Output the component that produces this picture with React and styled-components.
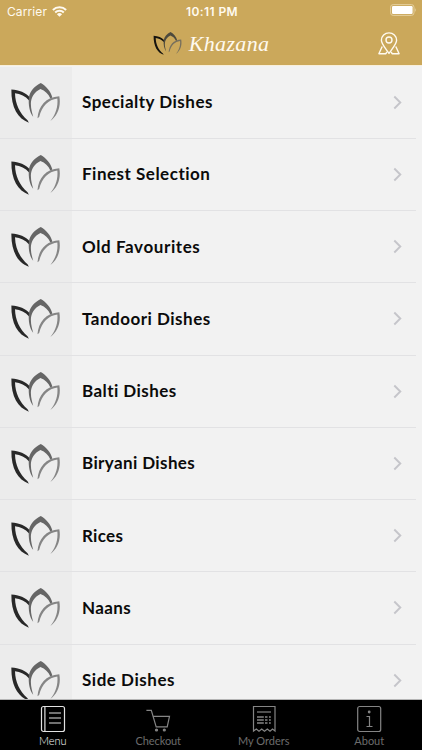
import React from 'react';
import styled, { createGlobalStyle } from 'styled-components';

const GlobalStyle = createGlobalStyle`
	* {
		box-sizing: border-box;
	}
	body {
		margin: 0;
		background: #f2f2f2;
		font-family: Lato, 'Open Sans', sans-serif;
	}
`;

const Screen = styled.div`
	width: 422px;
	height: 750px;
	display: flex;
	flex-direction: column;
	overflow: hidden;
	background: #f2f2f2;
`;

const Header = styled.header`
	height: 66px;
	flex-shrink: 0;
	background: #cba85b;
	border-bottom: 1px solid #f8efdb;
	color: #fffaf0;
`;

const StatusBar = styled.div`
	height: 22px;
	display: grid;
	grid-template-columns: 1fr auto 1fr;
	align-items: center;
	padding: 0 5px 0 7px;
	font-family: Inter, sans-serif;
	font-size: 12px;
`;

const Carrier = styled.div`
	display: flex;
	align-items: center;
	gap: 5px;
	letter-spacing: 0.1px;
`;

const Time = styled.div`
	font-weight: 600;
	letter-spacing: 0.4px;
`;

const Battery = styled.div`
	display: flex;
	justify-content: flex-end;
	padding-bottom: 2px;
`;

const NavBar = styled.div`
	height: 43px;
	display: grid;
	grid-template-columns: 1fr auto 1fr;
	align-items: center;
	padding: 0 22px;
`;

const Brand = styled.div`
	grid-column: 2;
	display: flex;
	align-items: center;
	gap: 7px;
`;

const BrandName = styled.h1`
	margin: 0;
	font-family: 'Liberation Serif', serif;
	font-size: 22px;
	line-height: 26px;
	font-style: italic;
	font-weight: 400;
	letter-spacing: 0.35px;
`;

const MapButton = styled.button`
	justify-self: end;
	display: flex;
	padding: 0;
	border: 0;
	background: none;
	color: inherit;
`;

const List = styled.main`
	flex: 1;
	min-height: 0;
	padding-top: 0.5px;
	overflow: hidden;
`;

const Row = styled.div`
	height: 72.25px;
	display: flex;
`;

const Thumb = styled.div`
	width: 71.5px;
	display: flex;
	justify-content: center;
	align-items: center;
	padding-top: 1px;
	background: #ececec;
	border-bottom: 1px solid #e2e2e4;
`;

const RowBody = styled.div`
	flex: 1;
	display: flex;
	justify-content: space-between;
	align-items: center;
	margin-right: 6px;
	padding: 0 14px 0 10.5px;
	border-bottom: 1px solid #e2e2e4;
`;

const RowTitle = styled.span`
	font-size: 17px;
	line-height: 22px;
	font-weight: 700;
	color: #0b0b0b;
	letter-spacing: ${(props) => props.$spacing}px;
`;

const TabBar = styled.nav`
	height: 51px;
	flex-shrink: 0;
	display: grid;
	grid-template-columns: repeat(4, 1fr);
	background: #000;
	border-top: 1px solid #b5b5b5;
`;

const Tab = styled.div`
	display: flex;
	flex-direction: column;
	align-items: center;
	padding-top: 5px;
	color: ${(props) => (props.$active ? '#e2e2e2' : '#858585')};
	font-size: 11px;
	line-height: 14px;
	letter-spacing: ${(props) => props.$spacing}px;

	svg {
		display: block;
		margin-bottom: 1px;
	}
`;

const TabLabel = styled.span`
	font-weight: ${(props) => (props.$active ? 300 : 400)};
	color: ${(props) => (props.$active ? '#fff' : '#6c6c6c')};
`;

const Lotus = ({ width, height, dark = '#282828', mid = '#666', light = '#858585' }) => (
	<svg width={width} height={height} viewBox="34 47 148 121">
		<path
			fill={dark}
			d="M35 67C58 69 79 76 91 91L88 99C78 87 62 80 46 78C47 111 59 137 84 160L88 167C55 156 34 122 35 67Z"
		/>
		<path
			fill={mid}
			d="M124 47C141 57 154 72 159 91L153 94C147 80 137 70 123 65C105 73 94 90 94 110C94 127 98 137 101 149C90 136 86 113 88 91C91 71 105 57 124 47Z"
		/>
		<path
			fill={light}
			d="M180 87C186 119 174 147 153 162C167 144 177 121 174 94C147 98 128 115 119 150L114 154C117 117 139 89 180 87Z"
		/>
	</svg>
);

const WifiIcon = () => (
	<svg width="15" height="11" viewBox="0 0 15 11" fill="none" stroke="currentColor" strokeWidth="2">
		<path d="M.9 4C4.500.4 10.500.4 14.100 4M3.200 6.500C5.600 4.200 9.400 4.200 11.800 6.500" />
		<path d="M4.900 8.200Q7.500 6 10.100 8.200L7.500 10.800Z" fill="currentColor" stroke="none" />
	</svg>
);

const BatteryIcon = () => (
	<svg width="27" height="12" viewBox="0 0 27 12">
		<rect x=".6" y=".6" width="23.400" height="10.800" rx="2.600" fill="none" stroke="#e5cf9d" />
		<rect x="2" y="2" width="20.600" height="8" rx="1.200" fill="#fff" />
		<path d="M25.200 4Q26.900 6 25.200 8Z" fill="#e5cf9d" />
	</svg>
);

const MapIcon = () => (
	<svg width="22" height="23" viewBox="0 0 22 23" fill="none" stroke="currentColor" strokeWidth="1.400" strokeLinejoin="round">
		<path d="M11 21.500C8.500 17.500 3.400 12 3.400 8.200A7.600 7.300 0 0 1 18.600 8.200C18.600 12 13.500 17.500 11 21.500Z" />
		<circle cx="11" cy="8" r="3" />
		<path d="M4.200 14.500L.9 21.700H7.700L9 20M17.800 14.500L21.100 21.700H14.300L13 20" />
	</svg>
);

const Chevron = () => (
	<svg width="9" height="15" viewBox="0 0 9 15" fill="none" stroke="#c5c5ca" strokeWidth="1.900">
		<path d="M1.300 1.500L7.300 7.500L1.300 13.500" />
	</svg>
);

const MenuIcon = () => (
	<svg width="26" height="28" viewBox="0 0 26 28" fill="none" stroke="currentColor" strokeWidth="1.200">
		<rect x="1.500" y="1.500" width="23" height="25" rx="2" />
		<path d="M4.900 1.500V26.500M9 8H21M9 13H21M9 18H21" />
	</svg>
);

const CartIcon = () => (
	<svg width="26" height="28" viewBox="0 0 26 28" fill="none" stroke="currentColor" strokeWidth="1.200">
		<path d="M1.400 5.300H6.300L11.200 21.800H22.200L24.500 11.300H8" />
		<circle cx="11.500" cy="25" r="1" fill="currentColor" />
		<circle cx="19.300" cy="25" r="1" fill="currentColor" />
	</svg>
);

const OrdersIcon = () => (
	<svg width="26" height="28" viewBox="0 0 26 28" fill="none" stroke="currentColor" strokeWidth="1.200">
		<path d="M2.500 26V1.500H24V26L21.500 24L19 26.300L16.300 24L13.500 26.300L10.700 24L8 26.300L5.300 24Z" />
		<path d="M6 7H20" />
		<path
			strokeWidth="1.400"
			d="M6 12H12.800M6 15H12.800M6 18H12.800M14 12H16.500M14 15H16.500M14 18H16.500M18 12H19.800M18 15H19.800M18 18H19.800"
		/>
	</svg>
);

const InfoIcon = () => (
	<svg width="26" height="28" viewBox="0 0 26 28" fill="none" stroke="currentColor" strokeWidth="1.200">
		<rect x="1.700" y="1.500" width="23" height="25" rx="2" />
		<path d="M10.500 11.500H13.500V21.500M10.500 21.500H16.500" />
		<circle cx="13.200" cy="7" r=".8" fill="currentColor" />
	</svg>
);

const dishes = [
	{ name: 'Specialty Dishes', spacing: 0.5 },
	{ name: 'Finest Selection', spacing: 0.5 },
	{ name: 'Old Favourites', spacing: 0.6 },
	{ name: 'Tandoori Dishes', spacing: 0.5 },
	{ name: 'Balti Dishes', spacing: 0.43 },
	{ name: 'Biryani Dishes', spacing: 0.38 },
	{ name: 'Rices', spacing: 0.3 },
	{ name: 'Naans', spacing: 0.4 },
	{ name: 'Side Dishes', spacing: 0.53 },
];

const tabs = [
	{ label: 'Menu', icon: MenuIcon, spacing: 0, active: true },
	{ label: 'Checkout', icon: CartIcon, spacing: -0.1 },
	{ label: 'My Orders', icon: OrdersIcon, spacing: 0 },
	{ label: 'About', icon: InfoIcon, spacing: 0 },
];

const App = () => {
	return (
		<Screen>
			<GlobalStyle />
			<Header>
				<StatusBar>
					<Carrier>
						Carrier
						<WifiIcon />
					</Carrier>
					<Time>10:11 PM</Time>
					<Battery>
						<BatteryIcon />
					</Battery>
				</StatusBar>
				<NavBar>
					<Brand>
						<Lotus width={29} height={23} dark="#15130e" mid="#4d4a3d" light="#77705d" />
						<BrandName>Khazana</BrandName>
					</Brand>
					<MapButton aria-label="Find us">
						<MapIcon />
					</MapButton>
				</NavBar>
			</Header>
			<List>
				{dishes.map((dish) => (
					<Row key={dish.name}>
						<Thumb>
							<Lotus width={49} height={40} />
						</Thumb>
						<RowBody>
							<RowTitle $spacing={dish.spacing}>{dish.name}</RowTitle>
							<Chevron />
						</RowBody>
					</Row>
				))}
			</List>
			<TabBar>
				{tabs.map((tab) => (
					<Tab key={tab.label} $active={tab.active} $spacing={tab.spacing}>
						<tab.icon />
						<TabLabel $active={tab.active}>{tab.label}</TabLabel>
					</Tab>
				))}
			</TabBar>
		</Screen>
	);
};

export default App;
